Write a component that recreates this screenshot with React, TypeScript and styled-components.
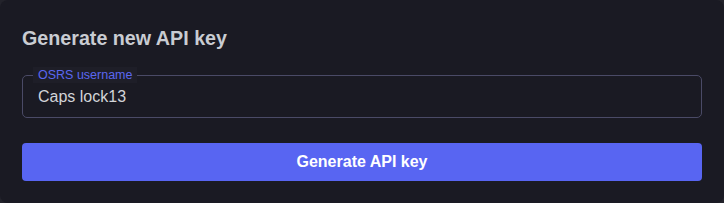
import React from "react";
import styled, { createGlobalStyle } from "styled-components";

const Global = createGlobalStyle`
  html, body { margin: 0; padding: 0; background: #23232b; }
  body { font-family: "Liberation Sans", Arial, sans-serif; }
  * { box-sizing: border-box; }
`;

const Card = styled.div`
  width: 724px;
  height: 203px;
  background: #1a1a23;
  border-radius: 8px;
  padding: 26px 22px 22px 22px;
  display: flex;
  flex-direction: column;
`;

const Title = styled.h2`
  margin: 0;
  font-size: 19.7px;
  line-height: 24px;
  font-weight: 700;
  color: #c9ccd2;
`;

const Field = styled.div`
  position: relative;
  margin-top: 25px;
  padding: 0 15px;
  height: 43px;
  border: 1px solid #4a4a66;
  border-radius: 5px;
  display: flex;
  align-items: center;
`;

const Label = styled.span`
  position: absolute;
  top: -9px;
  left: 10px;
  padding: 0 5px;
  font-size: 12.5px;
  line-height: 16px;
  color: #5b67f0;
  background: #1e1e28;
`;

const Input = styled.input`
  width: 100%;
  border: none;
  outline: none;
  background: transparent;
  color: #d2d4d8;
  font-family: "Liberation Sans", Arial, sans-serif;
  font-size: 16px;
  padding: 0;
  margin-top: 1px;
`;

const Button = styled.button`
  margin-top: 25px;
  height: 38px;
  border: none;
  border-radius: 4px;
  background: #5865f2;
  color: #ffffff;
  font-family: "Liberation Sans", Arial, sans-serif;
  font-size: 16px;
  font-weight: 700;
  cursor: pointer;
`;

export default function App() {
  return (
    <>
      <Global />
      <Card>
        <Title>Generate new API key</Title>
        <Field>
          <Label>OSRS username</Label>
          <Input defaultValue="Caps lock13" />
        </Field>
        <Button>Generate API key</Button>
      </Card>
    </>
  );
}
